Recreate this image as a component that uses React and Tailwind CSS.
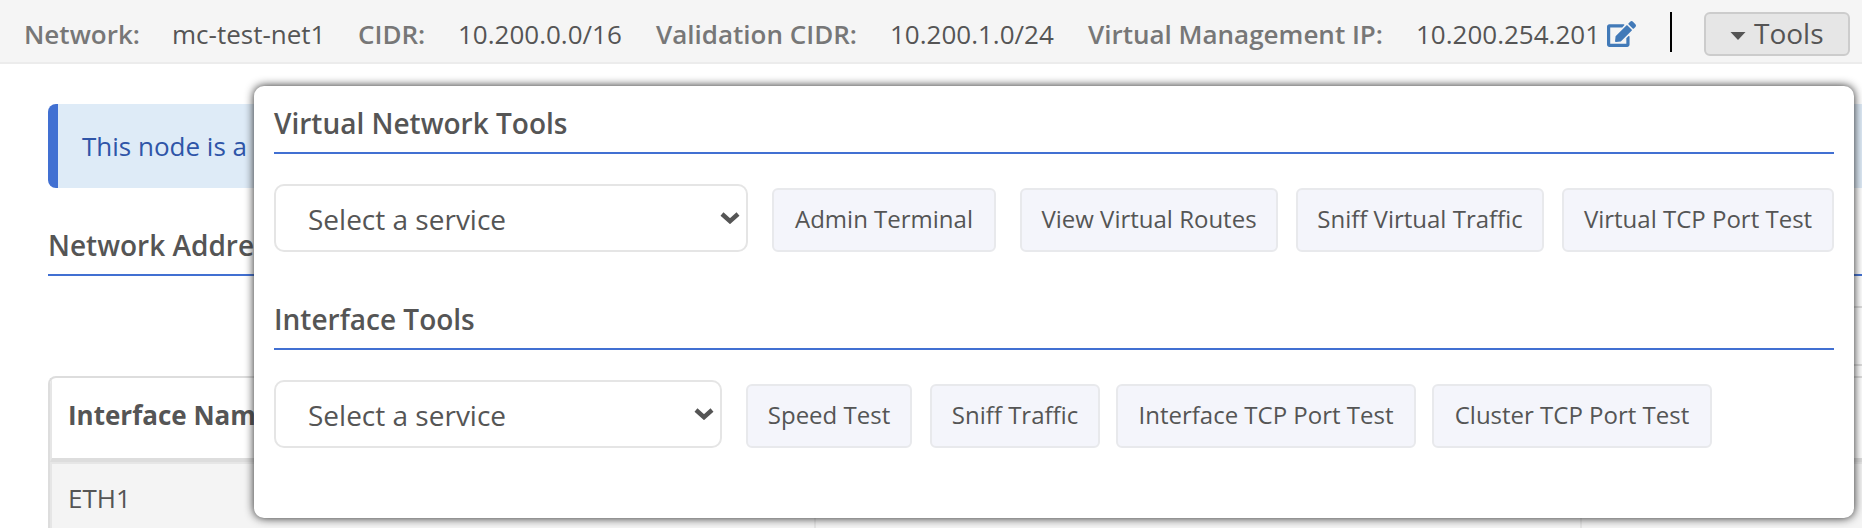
import { FaEdit } from "react-icons/fa";

const button = "h-16 shrink-0 rounded-md border-2 border-[#e8e9ec] bg-[#f4f5fb] pb-1 text-center text-[24px] leading-[57px] whitespace-nowrap";

function Info({ label, value, labelWidth, valueWidth }) {
  return (
    <>
      <span className={"shrink-0 font-semibold text-[#777] " + labelWidth}>{label}</span>
      <span className={"shrink-0 " + valueWidth}>{value}</span>
    </>
  );
}

function ServiceSelect({ width }) {
  return (
    <div className={"flex h-[68px] shrink-0 items-center justify-between rounded-[10px] border-2 border-[#e5e5e5] bg-white pr-[6px] pl-8 text-[28px] " + width}>
      <span className="pt-px">Select a service</span>
      <svg className="h-3 w-5" viewBox="0 0 20 12" fill="none" stroke="#555" strokeWidth="4.4">
        <path d="M2 2 L10 9.2 L18 2" />
      </svg>
    </div>
  );
}

function SectionTitle({ children }) {
  return (
    <h2 className="h-[68px] border-b-2 border-[#4170d2] pt-[18px] text-[28px] leading-[38px] font-semibold">{children}</h2>
  );
}

export default function App() {
  return (
    <div className="relative h-[528px] w-[1862px] overflow-hidden bg-white font-['Open_Sans','Noto_Sans',sans-serif] text-[#555]">
      <header className="flex h-16 border-b-2 border-[#ececec] bg-[#f5f5f5] pl-6 text-[26px] leading-[68px] whitespace-nowrap">
        <Info label="Network:" value="mc-test-net1" labelWidth="w-[148px]" valueWidth="w-[186px]" />
        <Info label="CIDR:" value="10.200.0.0/16" labelWidth="w-[100px]" valueWidth="w-[198px]" />
        <Info label="Validation CIDR:" value="10.200.1.0/24" labelWidth="w-[234px]" valueWidth="w-[198px]" />
        <Info label="Virtual Management IP:" value="10.200.254.201" labelWidth="w-[328px]" valueWidth="w-[191px]" />
        <FaEdit className="mt-[20px] h-7 w-[29px] shrink-0 text-[#427ab8]" />
        <div className="mt-3 ml-[34px] h-10 w-0.5 shrink-0 bg-black" />
        <button className="mt-3 ml-8 flex h-11 w-[146px] shrink-0 items-center rounded-md border-2 border-[#ccc] bg-[#e6e6e6] pl-6 text-[28px] leading-10">
          <svg className="mt-[3px] mr-2 h-2 w-4" viewBox="0 0 16 8" fill="#555"><path d="M0.5 0H15.5L8 8Z" /></svg>
          <span className="pb-[3px]">Tools</span>
        </button>
      </header>

      <main className="pt-10 pl-12">
        <div className="h-[84px] rounded-l-lg border-l-[10px] border-[#4170d2] bg-[#deebf7] pl-6 text-[26px] leading-[84px] text-[#2f55a8]">
          This node is a
        </div>
        <h2 className="h-[88px] border-b-2 border-[#4170d2] pt-[38px] text-[28px] leading-[38px] font-semibold">Network Addresses</h2>
        <div className="ml-auto flex h-[100px] w-[300px] flex-col pt-[30px]">
          <div className="h-[60px] border-y-2 border-[#ddd]" />
        </div>
        <table className="w-full table-fixed border-separate border-spacing-0 overflow-hidden rounded-tl-lg border-t-2 border-l-2 border-[#ddd] text-left text-[26px]">
          <thead>
            <tr>
              <th className="h-[84px] w-[764px] border-b-4 border-l-2 border-b-[#ddd] border-l-[#e6e6e6] p-0 pb-1.5 pl-4 leading-9 font-bold">Interface Name</th>
              <th className="w-[766px] border-b-4 border-l-2 border-b-[#ddd] border-l-[#e6e6e6]" />
              <th className="border-b-4 border-l-2 border-b-[#ddd] border-l-[#e6e6e6]" />
            </tr>
          </thead>
          <tbody>
            <tr className="bg-[#f4f4f4]">
              <td className="h-[74px] border-t-2 border-l-2 border-[#e6e6e6] p-0 pb-1 pl-4 leading-9">ETH1</td>
              <td className="border-t-2 border-l-2 border-[#e6e6e6]" />
              <td className="border-t-2 border-l-2 border-[#e6e6e6]" />
            </tr>
          </tbody>
        </table>
      </main>

      <section className="absolute top-[86px] left-[254px] h-[432px] w-[1600px] rounded-[10px] bg-white px-5 shadow-[0_0_10px_#222]">
        <SectionTitle>Virtual Network Tools</SectionTitle>
        <div className="flex items-end pt-[30px]">
          <ServiceSelect width="w-[474px]" />
          <button className={button + " ml-6 w-[224px]"}>Admin Terminal</button>
          <button className={button + " ml-6 w-[258px]"}>View Virtual Routes</button>
          <button className={button + " ml-[18px] w-[248px]"}>Sniff Virtual Traffic</button>
          <button className={button + " ml-[18px] w-[272px]"}>Virtual TCP Port Test</button>
        </div>
        <div className="h-[30px]" />
        <SectionTitle>Interface Tools</SectionTitle>
        <div className="flex items-end pt-[30px]">
          <ServiceSelect width="w-[448px]" />
          <button className={button + " ml-6 w-[166px]"}>Speed Test</button>
          <button className={button + " ml-[18px] w-[170px]"}>Sniff Traffic</button>
          <button className={button + " ml-4 w-[300px]"}>Interface TCP Port Test</button>
          <button className={button + " ml-4 w-[280px]"}>Cluster TCP Port Test</button>
        </div>
      </section>
    </div>
  );
}
